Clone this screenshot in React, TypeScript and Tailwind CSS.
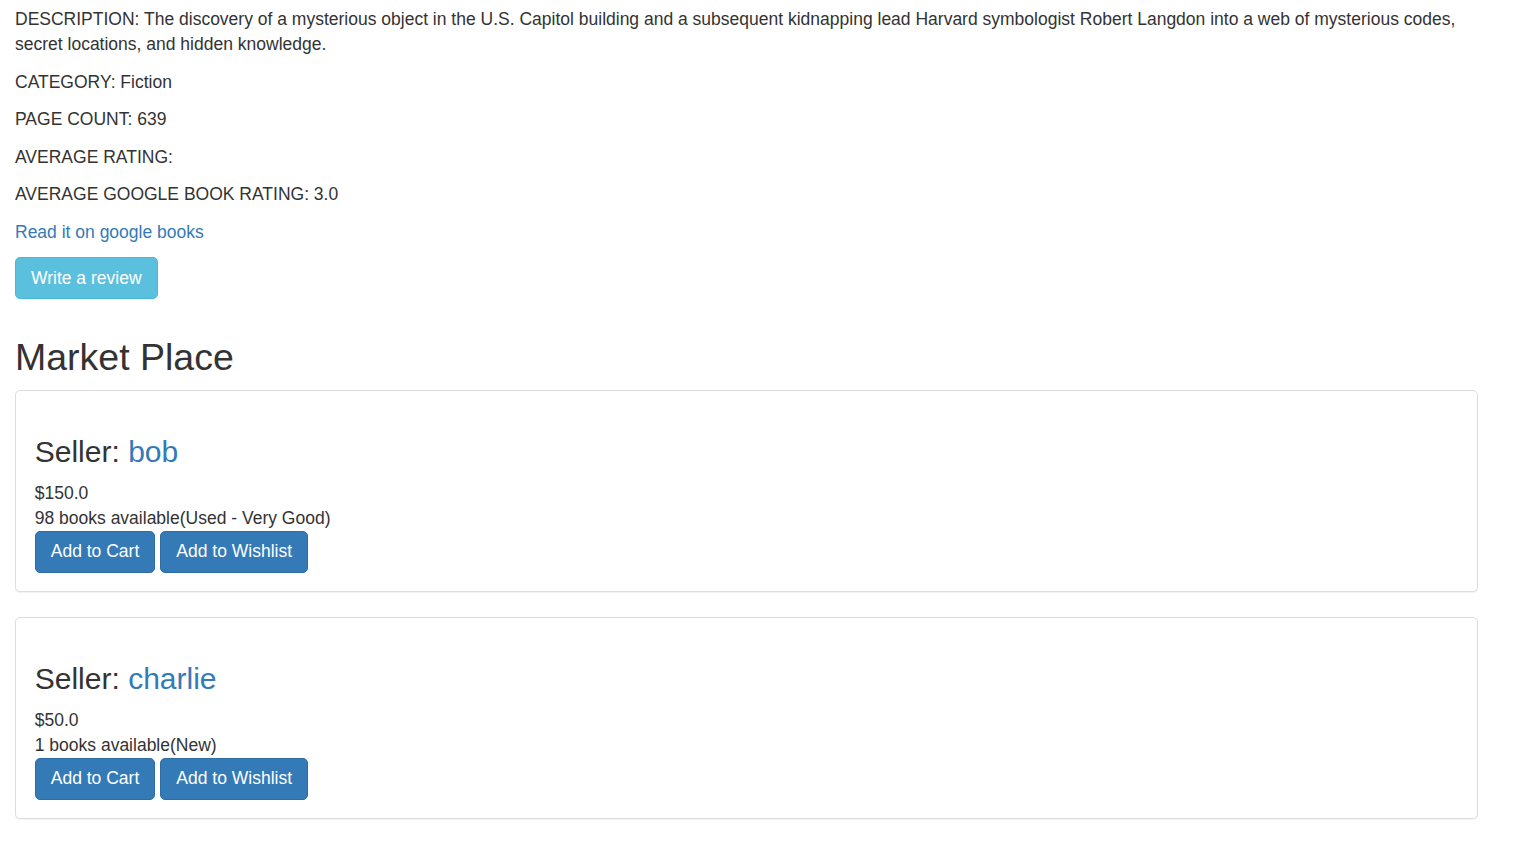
import React from 'react';

type Listing = {
  seller: string;
  price: string;
  qty: number;
  condition: string;
};

const listings: Listing[] = [
  { seller: 'bob', price: '$150.0', qty: 98, condition: 'Used - Very Good' },
  { seller: 'charlie', price: '$50.0', qty: 1, condition: 'New' },
];

const SellerCard = ({ item }: { item: Listing }) => (
  <div className="bg-white border-[1.25px] border-[#dddddd] rounded-[5px] shadow-[0_1px_1px_rgba(0,0,0,0.05)] mb-[25px]">
    <div className="p-[18.75px]">
      <h3 className="text-[30px] leading-[33px] mt-[25px] mb-[12.5px] text-[#333333]">
        Seller: <a href="#" className="text-[#337ab7]">{item.seller}</a>
      </h3>
      <div>{item.price}</div>
      <div>
        {item.qty} books available({item.condition})
      </div>
      <div className="flex gap-[5px]">
        <button className="bg-[#337ab7] border-[1.25px] border-[#2e6da4] text-white rounded-[5px] px-[15px] py-[7.5px] text-[17.5px] leading-[25px]">
          Add to Cart
        </button>
        <button className="bg-[#337ab7] border-[1.25px] border-[#2e6da4] text-white rounded-[5px] px-[15px] py-[7.5px] text-[17.5px] leading-[25px]">
          Add to Wishlist
        </button>
      </div>
    </div>
  </div>
);

const App = () => {
  return (
    <div className="min-h-screen bg-white text-[#333333] text-[17.5px] leading-[25px] font-['Liberation_Sans',Arial,sans-serif]">
      <div className="pl-[15px] w-[1478px] pt-[7px]">
        <p className="mb-[12.5px]">
          DESCRIPTION: The discovery of a mysterious object in the U.S. Capitol building and a subsequent kidnapping lead
          Harvard symbologist Robert Langdon into a web of mysterious codes, secret locations, and hidden knowledge.
        </p>
        <p className="mb-[12.5px]">CATEGORY: Fiction</p>
        <p className="mb-[12.5px]">PAGE COUNT: 639</p>
        <p className="mb-[12.5px]">AVERAGE RATING: </p>
        <p className="mb-[12.5px]">AVERAGE GOOGLE BOOK RATING: 3.0</p>
        <p className="mb-[12.5px]">
          <a href="#" className="text-[#337ab7]">Read it on google books</a>
        </p>
        <div className="mb-[12.5px]">
          <button className="bg-[#5bc0de] border-[1.25px] border-[#46b8da] text-white rounded-[5px] px-[15px] py-[7.5px] text-[17.5px] leading-[25px]">
            Write a review
          </button>
        </div>

        <h2 className="text-[37.5px] leading-[41.25px] mt-[37.5px] mb-[12.5px]">Market Place</h2>

        {listings.map((item) => (
          <SellerCard key={item.seller} item={item} />
        ))}
      </div>
    </div>
  );
};

export default App;
